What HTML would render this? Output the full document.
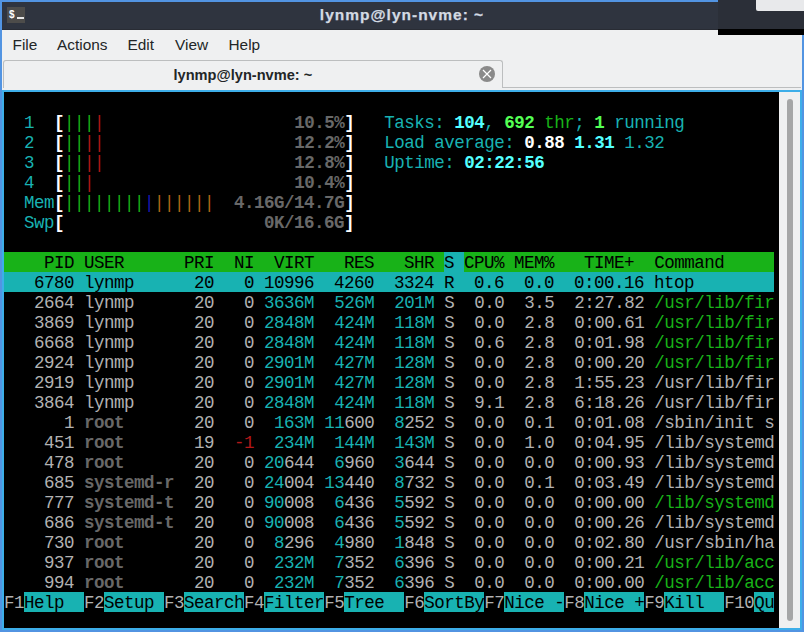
<!DOCTYPE html>
<html><head><meta charset="utf-8">
<style>
*{margin:0;padding:0;box-sizing:border-box}
html,body{width:804px;height:632px;overflow:hidden;background:#eff0f1}
body{position:relative;font-family:"Liberation Sans",sans-serif}
.abs{position:absolute}
#win{position:absolute;left:0;top:0;width:804px;height:632px;border:2px solid #5294e2;background:#eff0f1}
#title{position:absolute;left:2px;top:2px;width:800px;height:28px;background:#2f343f;border-bottom:1px solid #292c34}
#ticon{position:absolute;left:7px;top:7px;width:18px;height:16px;background:#4d4c4a}
#ttext{position:absolute;left:0;top:2px;width:804px;text-align:center;color:#d3dae3;font-weight:bold;-webkit-text-stroke:0.25px #d3dae3;font-size:15.5px;letter-spacing:1px;line-height:25px}
#over{position:absolute;left:718px;top:0;width:86px;height:29px;background:#2b2f38}
#over2{position:absolute;left:756px;top:0;width:48px;height:11px;background:#e8e9eb;border-bottom-left-radius:2px}
#over3{position:absolute;left:718px;top:29px;width:86px;height:6px;background:#000}
.menu{position:absolute;top:35px;font-size:15.4px;color:#232627;line-height:20px}
#tabline{position:absolute;left:502px;top:87px;width:299px;height:1px;background:#bcbebf}
#tab{position:absolute;left:3px;top:60px;width:500px;height:28px;border:1px solid #bcbebf;border-bottom:none;border-radius:3px 3px 0 0;background:#eff0f1}
#tabtext{position:absolute;left:173.5px;top:65px;font-size:14.6px;font-weight:bold;color:#232627;line-height:20px}
#close{position:absolute;left:479px;top:66px;width:16px;height:16px;border-radius:50%;background:#8a8a8a}
#frame{position:absolute;left:2px;top:90px;width:800px;height:540px;border:2px solid #3daee9;background:#eff0f1}
#term{position:absolute;left:4px;top:92px;width:775px;height:536px;background:#000;overflow:hidden}
#sbh{position:absolute;left:787px;top:99px;width:6px;height:522px;border-radius:3px;background:#a5a6a7}
.r{position:absolute;left:0;height:20px;width:775px;white-space:pre;font-family:"Liberation Mono",monospace;font-size:17.5px;letter-spacing:-0.5px;line-height:22px;color:#b2b2b2}
.r span{display:inline-block;height:20px;vertical-align:top}
</style></head><body>
<div id="win"></div>
<div id="title"></div>
<div id="ticon"><svg width="18" height="16" viewBox="0 0 18 16" style="position:absolute;left:0;top:0"><text x="2" y="11.2" font-family="Liberation Sans" font-weight="bold" font-size="10" fill="#fff">$</text><rect x="10" y="10" width="7" height="2" fill="#e8e8e8"/></svg></div>
<div id="ttext">lynmp@lyn-nvme: ~</div>
<div id="over"></div><div id="over2"></div><div id="over3"></div>
<div class="menu" style="left:12.5px">File</div>
<div class="menu" style="left:57px">Actions</div>
<div class="menu" style="left:127.5px">Edit</div>
<div class="menu" style="left:175px">View</div>
<div class="menu" style="left:228.5px">Help</div>
<div id="tabline"></div>
<div id="tab"></div>
<div id="tabtext">lynmp@lyn-nvme: ~</div>
<div id="close"><svg width="16" height="16" viewBox="0 0 16 16"><path d="M4 4L12 12M12 4L4 12" stroke="#fff" stroke-width="1.2"/></svg></div>
<div id="frame"></div>
<div id="term">
<div class="r" style="top:0px"></div>
<div class="r" style="top:20px"><span style="color:#18b2b2">  1  </span><span style="color:#ffffff;font-weight:bold">[</span><span style="color:#18b218">|</span><span style="color:#18b218">|</span><span style="color:#18b218">|</span><span style="color:#b21818">|</span>                   <span style="color:#686868;font-weight:bold">10.5%</span><span style="color:#ffffff;font-weight:bold">]</span>   <span style="color:#18b2b2">Tasks: </span><span style="color:#54ffff;font-weight:bold">104</span><span style="color:#18b2b2">, </span><span style="color:#54ff54;font-weight:bold">692</span><span style="color:#18b218"> thr</span><span style="color:#18b2b2">; </span><span style="color:#54ff54;font-weight:bold">1</span><span style="color:#18b2b2"> running</span></div>
<div class="r" style="top:40px"><span style="color:#18b2b2">  2  </span><span style="color:#ffffff;font-weight:bold">[</span><span style="color:#18b218">|</span><span style="color:#18b218">|</span><span style="color:#b21818">|</span><span style="color:#b21818">|</span>                   <span style="color:#686868;font-weight:bold">12.2%</span><span style="color:#ffffff;font-weight:bold">]</span>   <span style="color:#18b2b2">Load average: </span><span style="color:#ffffff;font-weight:bold">0.88 </span><span style="color:#54ffff;font-weight:bold">1.31 </span><span style="color:#18b2b2">1.32</span></div>
<div class="r" style="top:60px"><span style="color:#18b2b2">  3  </span><span style="color:#ffffff;font-weight:bold">[</span><span style="color:#18b218">|</span><span style="color:#18b218">|</span><span style="color:#b21818">|</span><span style="color:#b21818">|</span>                   <span style="color:#686868;font-weight:bold">12.8%</span><span style="color:#ffffff;font-weight:bold">]</span>   <span style="color:#18b2b2">Uptime: </span><span style="color:#54ffff;font-weight:bold">02:22:56</span></div>
<div class="r" style="top:80px"><span style="color:#18b2b2">  4  </span><span style="color:#ffffff;font-weight:bold">[</span><span style="color:#18b218">|</span><span style="color:#18b218">|</span><span style="color:#b21818">|</span>                    <span style="color:#686868;font-weight:bold">10.4%</span><span style="color:#ffffff;font-weight:bold">]</span></div>
<div class="r" style="top:100px">  <span style="color:#18b2b2">Mem</span><span style="color:#ffffff;font-weight:bold">[</span><span style="color:#18b218">||||||||</span><span style="color:#1818b2">|</span><span style="color:#b26818">||||||</span>  <span style="color:#686868;font-weight:bold">4.16G/14.7G</span><span style="color:#ffffff;font-weight:bold">]</span></div>
<div class="r" style="top:120px">  <span style="color:#18b2b2">Swp</span><span style="color:#ffffff;font-weight:bold">[</span>                    <span style="color:#686868;font-weight:bold">0K/16.6G</span><span style="color:#ffffff;font-weight:bold">]</span></div>
<div class="r" style="top:140px"></div>
<div class="r" style="top:160px"><span class="b" style="color:#000000;background:#18b218">    PID USER      PRI  NI  VIRT   RES   SHR </span><span class="b" style="color:#000000;background:#18b2b2">S </span><span class="b" style="color:#000000;background:#18b218">CPU% MEM%   TIME+  Command     </span></div>
<div class="r" style="top:180px"><span class="b" style="color:#000000;background:#18b2b2">   6780 lynmp      20   0 10996  4260  3324 R  0.6  0.0  0:00.16 htop        </span></div>
<div class="r" style="top:200px"><span style="color:#b2b2b2">   2664 </span><span style="color:#b2b2b2">lynmp    </span> <span style="color:#b2b2b2"> 20 </span><span style="color:#b2b2b2">  0</span> <span style="color:#18b2b2">3636M</span> <span style="color:#18b2b2"> 526M</span> <span style="color:#18b2b2"> 201M</span> <span style="color:#b2b2b2">S  0.0  3.5  2:27.82 </span><span style="color:#18b218">/usr/lib/fir</span></div>
<div class="r" style="top:220px"><span style="color:#b2b2b2">   3869 </span><span style="color:#b2b2b2">lynmp    </span> <span style="color:#b2b2b2"> 20 </span><span style="color:#b2b2b2">  0</span> <span style="color:#18b2b2">2848M</span> <span style="color:#18b2b2"> 424M</span> <span style="color:#18b2b2"> 118M</span> <span style="color:#b2b2b2">S  0.0  2.8  0:00.61 </span><span style="color:#18b218">/usr/lib/fir</span></div>
<div class="r" style="top:240px"><span style="color:#b2b2b2">   6668 </span><span style="color:#b2b2b2">lynmp    </span> <span style="color:#b2b2b2"> 20 </span><span style="color:#b2b2b2">  0</span> <span style="color:#18b2b2">2848M</span> <span style="color:#18b2b2"> 424M</span> <span style="color:#18b2b2"> 118M</span> <span style="color:#b2b2b2">S  0.6  2.8  0:01.98 </span><span style="color:#18b218">/usr/lib/fir</span></div>
<div class="r" style="top:260px"><span style="color:#b2b2b2">   2924 </span><span style="color:#b2b2b2">lynmp    </span> <span style="color:#b2b2b2"> 20 </span><span style="color:#b2b2b2">  0</span> <span style="color:#18b2b2">2901M</span> <span style="color:#18b2b2"> 427M</span> <span style="color:#18b2b2"> 128M</span> <span style="color:#b2b2b2">S  0.0  2.8  0:00.20 </span><span style="color:#18b218">/usr/lib/fir</span></div>
<div class="r" style="top:280px"><span style="color:#b2b2b2">   2919 </span><span style="color:#b2b2b2">lynmp    </span> <span style="color:#b2b2b2"> 20 </span><span style="color:#b2b2b2">  0</span> <span style="color:#18b2b2">2901M</span> <span style="color:#18b2b2"> 427M</span> <span style="color:#18b2b2"> 128M</span> <span style="color:#b2b2b2">S  0.0  2.8  1:55.23 </span><span style="color:#b2b2b2">/usr/lib/fir</span></div>
<div class="r" style="top:300px"><span style="color:#b2b2b2">   3864 </span><span style="color:#b2b2b2">lynmp    </span> <span style="color:#b2b2b2"> 20 </span><span style="color:#b2b2b2">  0</span> <span style="color:#18b2b2">2848M</span> <span style="color:#18b2b2"> 424M</span> <span style="color:#18b2b2"> 118M</span> <span style="color:#b2b2b2">S  9.1  2.8  6:18.26 </span><span style="color:#b2b2b2">/usr/lib/fir</span></div>
<div class="r" style="top:320px"><span style="color:#b2b2b2">      1 </span><span style="color:#686868;font-weight:bold">root     </span> <span style="color:#b2b2b2"> 20 </span><span style="color:#b2b2b2">  0</span> <span style="color:#18b2b2"> 163M</span> <span style="color:#18b2b2">11</span><span style="color:#b2b2b2">600</span>  <span style="color:#18b2b2">8</span><span style="color:#b2b2b2">252</span> <span style="color:#b2b2b2">S  0.0  0.1  0:01.08 </span><span style="color:#b2b2b2">/sbin/init s</span></div>
<div class="r" style="top:340px"><span style="color:#b2b2b2">    451 </span><span style="color:#686868;font-weight:bold">root     </span> <span style="color:#b2b2b2"> 19 </span><span style="color:#b21818"> -1</span> <span style="color:#18b2b2"> 234M</span> <span style="color:#18b2b2"> 144M</span> <span style="color:#18b2b2"> 143M</span> <span style="color:#b2b2b2">S  0.0  1.0  0:04.95 </span><span style="color:#b2b2b2">/lib/systemd</span></div>
<div class="r" style="top:360px"><span style="color:#b2b2b2">    478 </span><span style="color:#686868;font-weight:bold">root     </span> <span style="color:#b2b2b2"> 20 </span><span style="color:#b2b2b2">  0</span> <span style="color:#18b2b2">20</span><span style="color:#b2b2b2">644</span>  <span style="color:#18b2b2">6</span><span style="color:#b2b2b2">960</span>  <span style="color:#18b2b2">3</span><span style="color:#b2b2b2">644</span> <span style="color:#b2b2b2">S  0.0  0.0  0:00.93 </span><span style="color:#b2b2b2">/lib/systemd</span></div>
<div class="r" style="top:380px"><span style="color:#b2b2b2">    685 </span><span style="color:#686868;font-weight:bold">systemd-r</span> <span style="color:#b2b2b2"> 20 </span><span style="color:#b2b2b2">  0</span> <span style="color:#18b2b2">24</span><span style="color:#b2b2b2">004</span> <span style="color:#18b2b2">13</span><span style="color:#b2b2b2">440</span>  <span style="color:#18b2b2">8</span><span style="color:#b2b2b2">732</span> <span style="color:#b2b2b2">S  0.0  0.1  0:03.49 </span><span style="color:#b2b2b2">/lib/systemd</span></div>
<div class="r" style="top:400px"><span style="color:#b2b2b2">    777 </span><span style="color:#686868;font-weight:bold">systemd-t</span> <span style="color:#b2b2b2"> 20 </span><span style="color:#b2b2b2">  0</span> <span style="color:#18b2b2">90</span><span style="color:#b2b2b2">008</span>  <span style="color:#18b2b2">6</span><span style="color:#b2b2b2">436</span>  <span style="color:#18b2b2">5</span><span style="color:#b2b2b2">592</span> <span style="color:#b2b2b2">S  0.0  0.0  0:00.00 </span><span style="color:#18b218">/lib/systemd</span></div>
<div class="r" style="top:420px"><span style="color:#b2b2b2">    686 </span><span style="color:#686868;font-weight:bold">systemd-t</span> <span style="color:#b2b2b2"> 20 </span><span style="color:#b2b2b2">  0</span> <span style="color:#18b2b2">90</span><span style="color:#b2b2b2">008</span>  <span style="color:#18b2b2">6</span><span style="color:#b2b2b2">436</span>  <span style="color:#18b2b2">5</span><span style="color:#b2b2b2">592</span> <span style="color:#b2b2b2">S  0.0  0.0  0:00.26 </span><span style="color:#b2b2b2">/lib/systemd</span></div>
<div class="r" style="top:440px"><span style="color:#b2b2b2">    730 </span><span style="color:#686868;font-weight:bold">root     </span> <span style="color:#b2b2b2"> 20 </span><span style="color:#b2b2b2">  0</span>  <span style="color:#18b2b2">8</span><span style="color:#b2b2b2">296</span>  <span style="color:#18b2b2">4</span><span style="color:#b2b2b2">980</span>  <span style="color:#18b2b2">1</span><span style="color:#b2b2b2">848</span> <span style="color:#b2b2b2">S  0.0  0.0  0:02.80 </span><span style="color:#b2b2b2">/usr/sbin/ha</span></div>
<div class="r" style="top:460px"><span style="color:#b2b2b2">    937 </span><span style="color:#686868;font-weight:bold">root     </span> <span style="color:#b2b2b2"> 20 </span><span style="color:#b2b2b2">  0</span> <span style="color:#18b2b2"> 232M</span>  <span style="color:#18b2b2">7</span><span style="color:#b2b2b2">352</span>  <span style="color:#18b2b2">6</span><span style="color:#b2b2b2">396</span> <span style="color:#b2b2b2">S  0.0  0.0  0:00.21 </span><span style="color:#18b218">/usr/lib/acc</span></div>
<div class="r" style="top:480px"><span style="color:#b2b2b2">    994 </span><span style="color:#686868;font-weight:bold">root     </span> <span style="color:#b2b2b2"> 20 </span><span style="color:#b2b2b2">  0</span> <span style="color:#18b2b2"> 232M</span>  <span style="color:#18b2b2">7</span><span style="color:#b2b2b2">352</span>  <span style="color:#18b2b2">6</span><span style="color:#b2b2b2">396</span> <span style="color:#b2b2b2">S  0.0  0.0  0:00.00 </span><span style="color:#18b218">/usr/lib/acc</span></div>
<div class="r" style="top:500px"><span style="color:#b2b2b2">F1</span><span class="b" style="color:#000000;background:#18b2b2">Help  </span><span style="color:#b2b2b2">F2</span><span class="b" style="color:#000000;background:#18b2b2">Setup </span><span style="color:#b2b2b2">F3</span><span class="b" style="color:#000000;background:#18b2b2">Search</span><span style="color:#b2b2b2">F4</span><span class="b" style="color:#000000;background:#18b2b2">Filter</span><span style="color:#b2b2b2">F5</span><span class="b" style="color:#000000;background:#18b2b2">Tree  </span><span style="color:#b2b2b2">F6</span><span class="b" style="color:#000000;background:#18b2b2">SortBy</span><span style="color:#b2b2b2">F7</span><span class="b" style="color:#000000;background:#18b2b2">Nice -</span><span style="color:#b2b2b2">F8</span><span class="b" style="color:#000000;background:#18b2b2">Nice +</span><span style="color:#b2b2b2">F9</span><span class="b" style="color:#000000;background:#18b2b2">Kill  </span><span style="color:#b2b2b2">F10</span><span class="b" style="color:#000000;background:#18b2b2">Qu</span></div>
</div>
<div id="sbh"></div>
</body></html>
